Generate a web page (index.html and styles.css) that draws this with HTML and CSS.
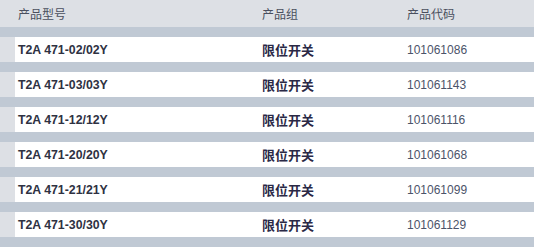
FILE: index.html
```html
<!DOCTYPE html>
<html lang="zh">
<head>
<meta charset="utf-8">
<link rel="stylesheet" href="styles.css">
</head>
<body>
<div class="table">
  <div class="head">
    <div class="c1">产品型号</div>
    <div class="c2">产品组</div>
    <div class="c3">产品代码</div>
  </div>
  <div class="row"><div class="inner"><div class="c1 model">T2A 471-02/02Y</div><div class="c2 group">限位开关</div><div class="c3 code">101061086</div></div></div>
  <div class="row"><div class="inner"><div class="c1 model">T2A 471-03/03Y</div><div class="c2 group">限位开关</div><div class="c3 code">101061143</div></div></div>
  <div class="row"><div class="inner"><div class="c1 model">T2A 471-12/12Y</div><div class="c2 group">限位开关</div><div class="c3 code">101061116</div></div></div>
  <div class="row"><div class="inner"><div class="c1 model">T2A 471-20/20Y</div><div class="c2 group">限位开关</div><div class="c3 code">101061068</div></div></div>
  <div class="row"><div class="inner"><div class="c1 model">T2A 471-21/21Y</div><div class="c2 group">限位开关</div><div class="c3 code">101061099</div></div></div>
  <div class="row"><div class="inner"><div class="c1 model">T2A 471-30/30Y</div><div class="c2 group">限位开关</div><div class="c3 code">101061129</div></div></div>
</div>
</body>
</html>
```
FILE: styles.css
```css
html, body {
  margin: 0;
  padding: 0;
  background: #c0c9d4;
}
.table {
  width: 534px;
  font-family: "Liberation Sans", Arial, "Noto Sans CJK SC", sans-serif;
  font-size: 12px;
  display: flex;
  flex-direction: column;
  gap: 10px;
  padding-bottom: 10px;
}
.head {
  height: 27px;
  background: #dde0e5;
  display: flex;
  align-items: center;
  color: #4a4f5e;
  padding-left: 18px;
  box-sizing: border-box;
}
.row {
  height: 25px;
  background: #dde0e5;
  padding-left: 15px;
  box-sizing: border-box;
}
.inner {
  height: 100%;
  background: #fff;
  display: flex;
  align-items: center;
  padding-left: 3px;
}
.c1 { width: 244px; }
.c2 { width: 145px; }
.c3 { flex: 1; }
.model {
  font-weight: bold;
  font-size: 12.3px;
  color: #2e3142;
}
.group {
  font-weight: bold;
  font-size: 13px;
  color: #2a2846;
}
.code {
  color: #4b5369;
}
```
